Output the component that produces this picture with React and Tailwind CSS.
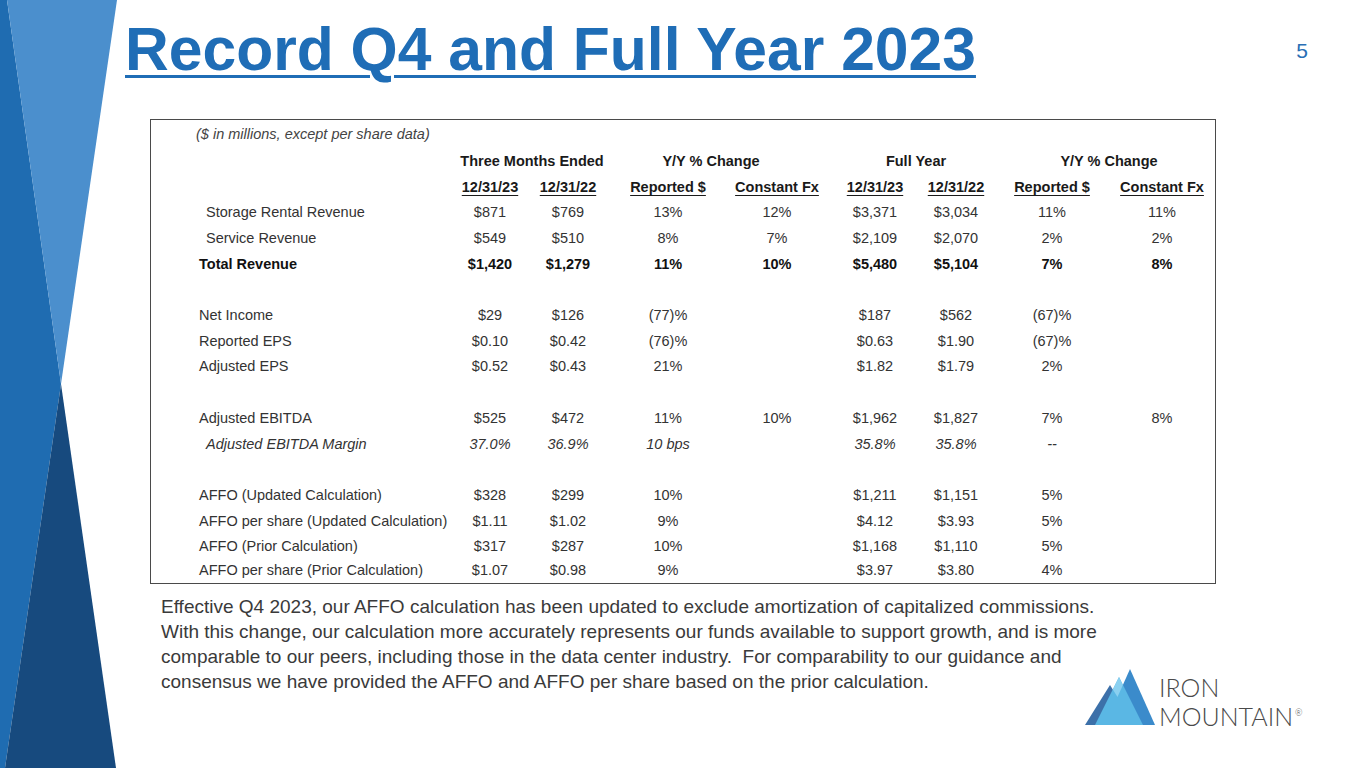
import React from "react";

const rows = [
  { label: "Storage Rental Revenue", indent: true, vals: ["$871", "$769", "13%", "12%", "$3,371", "$3,034", "11%", "11%"] },
  { label: "Service Revenue", indent: true, vals: ["$549", "$510", "8%", "7%", "$2,109", "$2,070", "2%", "2%"] },
  { label: "Total Revenue", bold: true, vals: ["$1,420", "$1,279", "11%", "10%", "$5,480", "$5,104", "7%", "8%"] },
  null,
  { label: "Net Income", vals: ["$29", "$126", "(77)%", "", "$187", "$562", "(67)%", ""] },
  { label: "Reported EPS", vals: ["$0.10", "$0.42", "(76)%", "", "$0.63", "$1.90", "(67)%", ""] },
  { label: "Adjusted EPS", vals: ["$0.52", "$0.43", "21%", "", "$1.82", "$1.79", "2%", ""] },
  null,
  { label: "Adjusted EBITDA", vals: ["$525", "$472", "11%", "10%", "$1,962", "$1,827", "7%", "8%"] },
  { label: "Adjusted EBITDA Margin", indent: true, italic: true, vals: ["37.0%", "36.9%", "10 bps", "", "35.8%", "35.8%", "--", ""] },
  null,
  { label: "AFFO (Updated Calculation)", vals: ["$328", "$299", "10%", "", "$1,211", "$1,151", "5%", ""] },
  { label: "AFFO per share (Updated Calculation)", vals: ["$1.11", "$1.02", "9%", "", "$4.12", "$3.93", "5%", ""] },
  { label: "AFFO (Prior Calculation)", vals: ["$317", "$287", "10%", "", "$1,168", "$1,110", "5%", ""] },
  { label: "AFFO per share (Prior Calculation)", last: true, vals: ["$1.07", "$0.98", "9%", "", "$3.97", "$3.80", "4%", ""] },
];

const GRID = "grid grid-cols-[300px_78px_78px_122px_96px_100px_62px_130px_90px]";

function Cell({ children, className = "" }) {
  return <div className={"flex justify-center items-center whitespace-nowrap " + className}>{children}</div>;
}

function LeftDecor() {
  return (
    <svg className="absolute left-0 top-0" width="120" height="768" viewBox="0 0 120 768">
      <polygon points="0,0 7,0 61,384 5,768 0,768" fill="#1f6cb1" />
      <polygon points="7,0 117,0 61,384" fill="#4b8fcd" />
      <polygon points="61,384 5,768 116,768" fill="#174a7e" />
    </svg>
  );
}

function Logo() {
  return (
    <div className="flex items-start">
      <svg width="74" height="58" viewBox="0 0 74 58" className="shrink-0">
        <polygon points="26,17 1,57 51,57" fill="#3c70a9" />
        <polygon points="46,1 21,57 71,57" fill="#3b8bcb" />
        <polygon points="35,9 11,57 59,57" fill="#5ab7e4" />
        <polygon points="35,9 38.9,16.9 33.5,29 28.8,21.4" fill="#8ad0f0" />
      </svg>
      <div className="ml-[1px] mt-[5px] flex flex-col text-[#4a4a4a] font-light text-[25px] leading-[28.5px] whitespace-nowrap" style={{ fontFamily: "Lato, 'Open Sans', sans-serif" }}>
        <span>IRON</span>
        <span className="flex items-start">
          MOUNTAIN<span className="text-[9px] leading-none mt-[6px] ml-[2px]">®</span>
        </span>
      </div>
    </div>
  );
}

export default function App() {
  return (
    <div className="relative w-[1365px] h-[768px] overflow-hidden bg-white" style={{ fontFamily: "'Liberation Sans', Arial, sans-serif" }}>
      <LeftDecor />
      <div className="relative flex flex-col">
        {/* header */}
        <div className="flex h-[119px] items-start pt-[19px]">
          <h1 className="ml-[125px] text-[60.6px] leading-none font-bold text-[#1f6db6] underline decoration-[3px] underline-offset-[5px]">
            Record Q4 and Full Year 2023
          </h1>
          <div className="ml-auto mr-[57px] mt-[21px] text-[21px] leading-none text-[#2a6fb5]">5</div>
        </div>

        {/* table */}
        <div className="ml-[150px] w-[1066px] h-[465px] border-[1.5px] border-[#4a4a4a] text-[14.5px] text-[#333]">
          <div className="h-[29px] flex items-center pl-[45px] italic text-[#444]">($ in millions, except per share data)</div>
          <div className="grid grid-cols-[300px_162px_196px_214px_172px] h-[25.7px] items-center font-bold text-[#1a1a1a]">
            <div />
            <Cell>Three Months Ended</Cell>
            <Cell>Y/Y % Change</Cell>
            <Cell>Full Year</Cell>
            <Cell>Y/Y % Change</Cell>
          </div>
          <div className={GRID + " h-[25.7px] items-center font-bold text-[#1a1a1a]"}>
            <div />
            {["12/31/23", "12/31/22", "Reported $", "Constant Fx", "12/31/23", "12/31/22", "Reported $", "Constant Fx"].map((h, i) => (
              <Cell key={i}><span className="underline underline-offset-[3px]">{h}</span></Cell>
            ))}
          </div>
          {rows.map((r, i) =>
            r === null ? (
              <div key={i} className="h-[25.7px]" />
            ) : (
              <div
                key={i}
                className={
                  GRID +
                  (r.last ? " h-[22px]" : " h-[25.7px]") +
                  " items-center" +
                  (r.bold ? " font-bold text-[#111]" : "") +
                  (r.italic ? " italic" : "")
                }
              >
                <div className={"whitespace-nowrap " + (r.indent ? "pl-[55px]" : "pl-[48px]")}>{r.label}</div>
                {r.vals.map((v, j) => (
                  <Cell key={j}>{v}</Cell>
                ))}
              </div>
            )
          )}
        </div>

        {/* footnote + logo */}
        <div className="flex items-start mt-[10px]">
          <p className="ml-[161px] w-[900px] shrink-0 text-[19px] leading-[25px] text-[#3a3a3a] whitespace-nowrap">
            Effective Q4 2023, our AFFO calculation has been updated to exclude amortization of capitalized commissions.
            <br />
            With this change, our calculation more accurately represents our funds available to support growth, and is more
            <br />
            comparable to our peers, including those in the data center industry.&nbsp; For comparability to our guidance and
            <br />
            consensus we have provided the AFFO and AFFO per share based on the prior calculation.
          </p>
          <div className="ml-[23px] shrink-0 mt-[74px]">
            <Logo />
          </div>
        </div>
      </div>
    </div>
  );
}
